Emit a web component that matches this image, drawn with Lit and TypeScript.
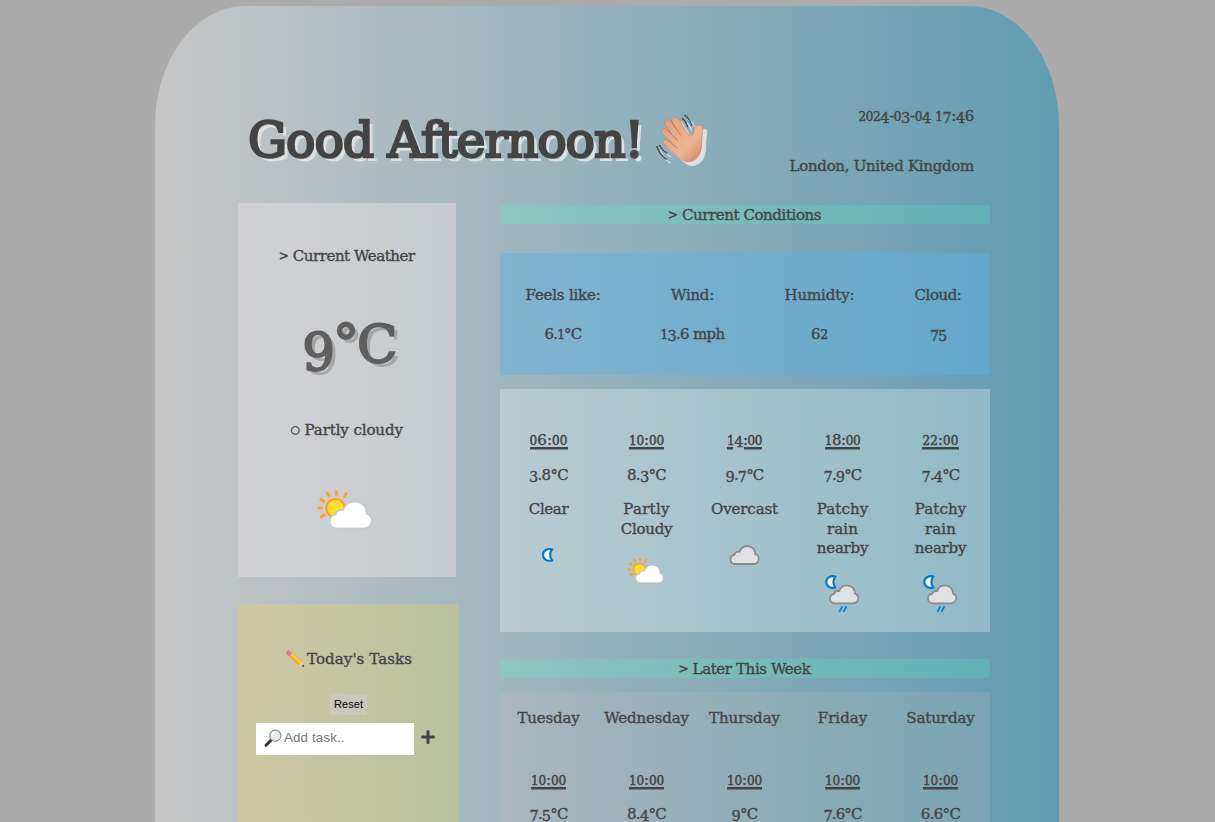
import { LitElement, html, css, svg } from "lit";
import { customElement, property } from "lit/decorators.js";

const SMALL = "012";
const LOW = "34579";

/** A line of text tracked to a given width, with old-style numerals. */
@customElement("set-text")
class SetText extends LitElement {
  @property() text = "";
  @property({ type: Number }) w = 0;

  static styles = css`
    :host { display: inline-block; white-space: nowrap; line-height: inherit; }
    .sm { font-size: 0.8em; line-height: 0; -webkit-text-stroke-width: 0.04em; }
    .low { font-size: 0.97em; vertical-align: -0.16em; line-height: 0; }
    .ring { font-size: 0.7em; line-height: 0; vertical-align: 0.2em; }
    .gt { font-size: 0.8em; line-height: 0; vertical-align: 0.06em; -webkit-text-stroke-width: 0.04em; }
  `;

  render() {
    const parts = [...this.text].map((c) =>
      SMALL.includes(c) ? html`<span class="sm">${c}</span>`
      : LOW.includes(c) ? html`<span class="low">${c}</span>`
      : c === "○" ? html`<span class="ring">${c}</span>`
      : c === ">" ? html`<span class="gt">${c}</span>` : c);
    return html`<span id="run">${parts}</span>`;
  }

  updated() {
    const run = this.renderRoot.querySelector("#run") as HTMLElement;
    if (!this.w) return;
    run.style.letterSpacing = "0px";
    const natural = run.getBoundingClientRect().width;
    const gap = (this.w - natural) / this.text.length;
    run.style.letterSpacing = gap + "px";
  }
}

const t = (text: string, w: number) => html`<set-text text=${text} .w=${w}></set-text>`;

const CLOUD = "M6 19C3 19 1 17 1 14.2C1 11.8 2.8 10 5 9.6C5.6 7.4 7.6 6.4 10 6.8C11.4 3 14.4 1 17.8 1C22.6 1 26 4.4 25.8 9C28 9.8 29.3 11.6 29.3 13.8C29.3 16.8 27 19 24 19Z";
const MOON = "M10.2 1.2C7.4 3.6 7.4 9.4 10.2 12.2C5.4 13.6 1 11 1 6.7C1 2.4 5.4 -.2 10.2 1.2Z";

const cloud = (x: number, y: number) => svg`
  <path d=${CLOUD} transform="translate(${x} ${y})" fill="#e0e1e5" stroke="#8a8a8c" stroke-width="1.8"/>`;
const moon = (x: number, y: number) => svg`
  <path d=${MOON} transform="translate(${x} ${y})" fill="#f4fbff" stroke="#0077cc" stroke-width="2.1" stroke-linejoin="round"/>`;

const art: Record<string, unknown> = {
  clear: moon(18, 18.2),
  overcast: cloud(10.5, 15),
  partly: svg`
    <circle cx="17.5" cy="20.5" r="6.1" fill="#ffe02e" stroke="#ff9d2b" stroke-width="1.5"/>
    <path d="M5.6 20.5H9M7.2 14.4l3.2 2M7.4 26.5l3.4-1.9M11.7 10l1.9 3.2M18 8.9v3.5M24.8 10.2l-1.8 3.3" stroke="#ff9d2b" stroke-width="1.9" fill="none"/>
    <path d=${CLOUD} transform="translate(12.6 15.2) scale(.98)" fill="#fff" stroke="#bfc3c3" stroke-opacity=".75" stroke-width="1.3"/>`,
  rain: svg`${moon(8.3, 6.3)}${cloud(12, 15.3)}
    <path d="M25.4 37.2l-3 5.6M29.5 37.2l-3 5.6" stroke="#0d7fd8" stroke-width="1.8"/>`,
};

const icon = (name: string, cls = "icon") => html`<svg class=${cls} viewBox="0 0 50 50">${art[name]}</svg>`;

type Line = [string, number];
const hours: { time: Line; temp: Line; text: Line[]; icon: string }[] = [
  { time: ["06:00", 38], temp: ["3.8°C", 39], text: [["Clear", 39.5]], icon: "clear" },
  { time: ["10:00", 35], temp: ["8.3°C", 39], text: [["Partly", 46.5], ["Cloudy", 51.5]], icon: "partly" },
  { time: ["14:00", 35], temp: ["9.7°C", 38], text: [["Overcast", 67]], icon: "overcast" },
  { time: ["18:00", 35.5], temp: ["7.9°C", 38], text: [["Patchy", 51.5], ["rain", 31], ["nearby", 51.5]], icon: "rain" },
  { time: ["22:00", 36], temp: ["7.4°C", 38], text: [["Patchy", 51.5], ["rain", 31], ["nearby", 51.5]], icon: "rain" },
];
const days: { day: Line; temp: Line }[] = [
  { day: ["Tuesday", 62], temp: ["7.5°C", 38] },
  { day: ["Wednesday", 84.5], temp: ["8.4°C", 39] },
  { day: ["Thursday", 71], temp: ["9°C", 26] },
  { day: ["Friday", 49.5], temp: ["7.6°C", 38] },
  { day: ["Saturday", 68.5], temp: ["6.6°C", 39.5] },
];
const conditions: { label: Line; value: Line }[] = [
  { label: ["Feels like:", 75], value: ["6.1°C", 37] },
  { label: ["Wind:", 43], value: ["13.6 mph", 64] },
  { label: ["Humidty:", 70], value: ["62", 17] },
  { label: ["Cloud:", 47], value: ["75", 16] },
];

@customElement("app-root")
class AppRoot extends LitElement {
  static styles = css`
    :host {
      display: block; height: 822px; overflow: hidden; background: #ababab; color: #444;
      font: 15px/20px "DejaVu Serif", serif;
      -webkit-text-stroke: 0.35px currentColor;
    }
    * { box-sizing: border-box; }
    .card {
      width: 904px; height: 1200px; margin: 5.5px 0 0 155px; padding: 100.5px 69.5px 0 83px;
      border-radius: 90px 90px 0 0 / 120px 120px 0 0;
      background: linear-gradient(to right, #c7c7c7, #629bb1);
      overflow: hidden;
    }
    header { display: flex; justify-content: space-between; height: 97px; padding: 0 15.5px 0 10px; }
    .hello { display: flex; align-items: flex-start; gap: 11px; margin: 0; font-size: 49px; font-weight: 400; line-height: 60px; padding-top: 5px; -webkit-text-stroke-width: 2.4px; text-shadow: 4px 4px 0 #e0e0e0; }
    .wave { width: 56.7px; height: 55px; margin-top: 2px; filter: drop-shadow(4px 4px 0 #e0e0e0); }
    .meta { display: flex; flex-direction: column; align-items: flex-end; gap: 30px; }
    .cols { display: flex; align-items: flex-start; justify-content: space-between; }
    .left { width: 221px; }
    .right { width: 490px; padding-top: 1.5px; }
    .now { width: 217.5px; height: 373.5px; padding-top: 42.5px; display: flex; flex-direction: column; align-items: center; background: linear-gradient(to right, #d1d1d3, #c6ccd0); }
    .temp { margin-top: 45px; margin-left: 4px; height: 64px; font-size: 53px; line-height: 66px; color: #5f5f5f; -webkit-text-stroke-width: 2px; text-shadow: 4px 4px 0 #a6a6a6; }
    .sky { margin-top: 45px; }
    .big { width: 76px; height: 76px; margin-top: 37px; }
    .tasks { height: 400px; margin-top: 27px; padding: 45px 18px 0; background: linear-gradient(to right, #cdc8a4, #b9c19f); }
    .title { display: flex; justify-content: center; gap: 2px; height: 20px; }
    .pencil { width: 19px; height: 19px; margin-left: 1px; }
    .reset { display: block; width: 37px; height: 21px; margin: 25px auto 0; padding: 0; border: 0; background: #c9c9bb; color: #000; font: 11px/21px "Liberation Sans", Arial, sans-serif; letter-spacing: 0.1px; -webkit-text-stroke-width: 0; }
    .add { display: flex; align-items: center; margin-top: 8px; gap: 7px; }
    .field { display: flex; align-items: center; gap: 2px; width: 158px; height: 32.5px; padding: 0 0 2px 8px; background: #fff; color: #757575; font: 13.33px "Liberation Sans", Arial, sans-serif; letter-spacing: 0.15px; -webkit-text-stroke-width: 0; }
    .lens { width: 18px; height: 18px; }
    .plus { width: 14px; height: 14px; margin-top: -4px; }
    .bar { height: 19px; line-height: 20px; text-align: center; background: linear-gradient(to right, #8ec5c0, #62b0b5); }
    .cond { display: flex; gap: 60px; height: 122.5px; margin-top: 29px; padding: 32.5px 0 0 26px; background: linear-gradient(to right, #82b4d1, #63a7ca); }
    .cond div { display: flex; flex-direction: column; align-items: center; gap: 19px; }
    .grid { display: grid; grid-template-columns: repeat(5, 98px); justify-items: center; }
    .hourly { height: 243px; margin-top: 13.5px; padding-top: 41.5px; background: linear-gradient(to right, #b8cbd1, #91b9c8); }
    .cell { display: flex; flex-direction: column; align-items: center; }
    .time { height: 20px; margin-bottom: 15px; background: linear-gradient(#444, #444) 0 17px / 100% 2.5px no-repeat; }
    .time.split { background-image: linear-gradient(to right, #444 6px, transparent 6px 17px, #444 17px); }
    .desc { margin-top: 15px; display: flex; flex-direction: column; align-items: center; line-height: 19.5px; }
    .icon { width: 50px; height: 50px; margin-top: 10px; }
    .later { margin-top: 27px; height: 19.5px; line-height: 21px; }
    .week { height: 240px; margin-top: 14px; padding-top: 16px; background: linear-gradient(to right, #a9b7be, #7aa4b4); }
    .week .time { margin: 42px 0 14px; }
  `;

  time(line: Line) {
    return html`<div class="time ${line[0] === "14:00" ? "split" : ""}">${t(...line)}</div>`;
  }

  render() {
    return html`
      <main class="card">
        <header>
          <h1 class="hello">
            ${t("Good Afternoon!", 395)}
            <svg class="wave" viewBox="550 70 170 165">
              <defs><linearGradient id="skin" x1="0" y1="0" x2="1" y2="1"><stop offset="0" stop-color="#dfa07e"/><stop offset=".65" stop-color="#ecb592"/><stop offset="1" stop-color="#d07c58"/></linearGradient></defs>
              <path d="M607 86C613 80 620 83 625 91L647 125C653 134 660 140 665 137C670 134 668 116 675 110C682 104 698 105 697 114C695 127 694 139 693 154C694 178 688 202 669 212C653 220 639 216 624 203L580 163C570 151 582 145 591 152L603 161L577 132C568 121 578 112 588 119L604 133L584 107C576 94 589 85 599 94L620 121L606 99C602 93 603 89 607 86Z" fill="url(#skin)" stroke="#c9805f" stroke-width="2"/>
              <path d="M601 95l30 43M588 119l33 34M591 151l29 25" fill="none" stroke="#bd7658" stroke-width="2.5"/>
              <path d="M641 76q17 11 22 33M634 86q13 9 17 27M566 166q9 16 24 25M558 169q8 26 30 40" fill="none" stroke="#3c3c3c" stroke-width="4" stroke-dasharray="7 1"/>
            </svg>
          </h1>
          <div class="meta">${t("2024-03-04 17:46", 115.5)}${t("London, United Kingdom", 184.5)}</div>
        </header>
        <div class="cols">
          <div class="left">
            <section class="now">
              ${t("> Current Weather", 136)}
              <div class="temp">${t("9°C", 93)}</div>
              <div class="sky">${t("○ Partly cloudy", 112)}</div>
              ${icon("partly", "big")}
            </section>
            <section class="tasks">
              <div class="title">
                <svg class="pencil" viewBox="0 0 19 19"><path d="M3 1.2L6.5 4.8 3.5 7.8.7 5C-.3 3 1.4.6 3 1.2Z" fill="#e8677f"/><path d="M5.3 2.8L7 4.5 3.9 7.7 2 6Z" fill="#8ba7b8"/><path d="M6.3 4L16.2 12.6 12.3 16.2 3.3 7.2Z" fill="#ffab24"/><path d="M5.4 5.1L15 14" stroke="#ffd047" stroke-width="1.6"/><path d="M16.2 12.6L18.3 18 12.3 16.2Z" fill="#e9c797"/><path d="M17.4 15.6L18.3 18 15.7 17.3Z" fill="#333"/></svg>
                ${t("Today's Tasks", 105)}
              </div>
              <button class="reset">Reset</button>
              <div class="add">
                <div class="field">
                  <svg class="lens" viewBox="0 0 18 18"><path d="M7.8 10.5L2 16.3" stroke="#34373a" stroke-width="3" stroke-linecap="round"/><circle cx="11.3" cy="6.7" r="5.6" fill="#e5ecf0" stroke="#8b9297" stroke-width="1.2"/><path d="M8 6.4a3.4 3.4 0 0 1 3-3.2" fill="none" stroke="#fff" stroke-width="1.6"/></svg>
                  <span>Add task..</span>
                </div>
                <svg class="plus" viewBox="0 0 14 14"><path d="M7 1.6v10.8M1.6 7h10.8" stroke="#444" stroke-width="3" stroke-linecap="round"/></svg>
              </div>
            </section>
          </div>
          <div class="right">
            <div class="bar">${t("> Current Conditions", 153)}</div>
            <section class="cond">
              ${conditions.map((c) => html`<div>${t(...c.label)}${t(...c.value)}</div>`)}
            </section>
            <section class="grid hourly">
              ${hours.map((h) => html`
                <div class="cell">
                  ${this.time(h.time)}${t(...h.temp)}
                  <div class="desc">${h.text.map((l) => t(...l))}</div>
                  ${icon(h.icon)}
                </div>`)}
            </section>
            <div class="bar later">${t("> Later This Week", 132)}</div>
            <section class="grid week">
              ${days.map((d) => html`
                <div class="cell">${t(...d.day)}${this.time(["10:00", 35])}${t(...d.temp)}</div>`)}
            </section>
          </div>
        </div>
      </main>`;
  }
}
